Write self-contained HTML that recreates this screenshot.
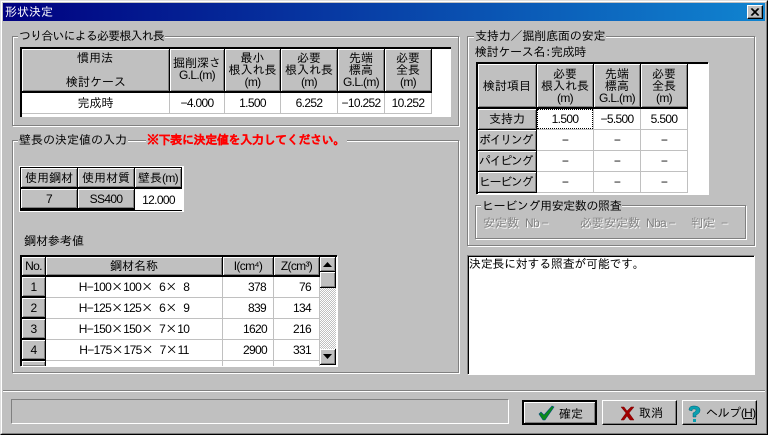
<!DOCTYPE html>
<html lang="ja"><head><meta charset="utf-8"><title>形状決定</title>
<style>
html,body{margin:0;padding:0;width:768px;height:435px;overflow:hidden;background:#c0c0c0}
body{position:relative;font:12px/12px "IPAGothic","Liberation Sans","Noto Sans CJK JP",sans-serif;color:#000}
div,span.a{position:absolute;box-sizing:border-box;white-space:nowrap}
i,.n{font-style:normal;font-family:"Liberation Sans",sans-serif;letter-spacing:-.67px}
.g{border:1px solid #808080;box-shadow:inset 1px 1px #fff,1px 1px #fff}
.l{background:#c0c0c0;height:14px;line-height:14px;padding:0 1px}
.h,.c,.r{display:flex;align-items:center;justify-content:center;text-align:center;line-height:12px}
.h{background:#c0c0c0;border-right:1px solid #000;border-bottom:2px solid #000;box-shadow:inset 1px 1px #fff,inset -1px -1px #808080}
.c{background:#fff;border-right:1px solid #c0c0c0;border-bottom:1px solid #c0c0c0}
.r{justify-content:flex-end}
.t{background:#fff;border-top:2px solid #000;border-left:2px solid #000}
.d{color:#808080;text-shadow:1px 1px 0 #fff}
.b{background:#c0c0c0;border:1px solid #000;border-top-color:#fff;border-left-color:#fff;box-shadow:inset -1px -1px #808080;display:flex;align-items:center;height:25px;top:400px}
</style></head><body>
<!-- window frame -->
<div style="left:0;top:0;width:768px;height:435px;border:1px solid #dfdfdf;border-right-color:#000;border-bottom-color:#000"></div>
<div style="left:1px;top:1px;width:766px;height:433px;border:1px solid #fff;border-right-color:#808080;border-bottom-color:#808080"></div>
<div style="left:3px;top:3px;width:762px;height:18px;background:linear-gradient(90deg,#000080,#1084d0);color:#fff;font-size:12px;line-height:18px;padding-left:2px">形状決定</div>
<div style="left:747px;top:5px;width:16px;height:14px;background:#c0c0c0;border:1px solid #000;border-top-color:#fff;border-left-color:#fff;box-shadow:inset -1px -1px #808080">
<svg width="14" height="12" style="position:absolute;left:0;top:0"><path d="M3 2.5l7 7M4 2.5l7 7M10 2.5l-7 7M11 2.5l-7 7" stroke="#000" fill="none"/></svg></div>

<!-- group 1 -->
<div class="g" style="left:12px;top:36px;width:447px;height:90px"></div>
<div class="l" style="left:18px;top:29px;letter-spacing:-.85px">つり合いによる必要根入れ長</div>
<div class="t" style="left:20px;top:47px;width:431px;height:70px"></div>
<div class="h" style="left:22px;top:49px;width:148px;height:44px;display:block"><span class="a" style="left:55px;top:3px;font-size:12px">慣用法</span><span class="a" style="left:44px;top:27px">検討ケース</span></div>
<div class="h" style="left:170px;top:49px;width:55px;height:44px;padding-bottom:2px"><span>掘削深さ<br><i>G.L.(m)</i></span></div>
<div class="h" style="left:225px;top:49px;width:56px;height:44px"><span>最小<br>根入れ長<br><i>(m)</i></span></div>
<div class="h" style="left:281px;top:49px;width:57px;height:44px"><span>必要<br>根入れ長<br><i>(m)</i></span></div>
<div class="h" style="left:338px;top:49px;width:47px;height:44px"><span>先端<br>標高<br><i>G.L.(m)</i></span></div>
<div class="h" style="left:385px;top:49px;width:47px;height:44px"><span>必要<br>全長<br><i>(m)</i></span></div>
<div class="c" style="left:22px;top:93px;width:148px;height:21px">完成時</div>
<div class="c n" style="left:170px;top:93px;width:55px;height:21px">−4.000</div>
<div class="c n" style="left:225px;top:93px;width:56px;height:21px">1.500</div>
<div class="c n" style="left:281px;top:93px;width:57px;height:21px">6.252</div>
<div class="c n" style="left:338px;top:93px;width:47px;height:21px">−10.252</div>
<div class="c n" style="left:385px;top:93px;width:47px;height:21px">10.252</div>

<!-- group 2 -->
<div class="g" style="left:12px;top:140px;width:447px;height:233px"></div>
<div class="l" style="left:18px;top:133px">壁長の決定値の入力</div>
<div class="l" style="left:146px;top:133px;color:#f00;font-weight:bold;letter-spacing:-.35px;padding-right:2px;-webkit-text-stroke:.3px #f00">※下表に決定値を入力してください。</div>
<div style="left:19px;top:166px;width:165px;height:46px;background:#fff"></div>
<div style="left:20px;top:167px;width:162px;height:44px;background:#000"></div>
<div class="h" style="left:21px;top:168px;width:57px;height:21px">使用鋼材</div>
<div class="h" style="left:78px;top:168px;width:57px;height:21px">使用材質</div>
<div class="h" style="left:135px;top:168px;width:47px;height:21px"><span>壁長<i>(m)</i></span></div>
<div class="h n" style="left:21px;top:189px;width:57px;height:21px">7</div>
<div class="h n" style="left:78px;top:189px;width:57px;height:21px">SS400</div>
<div class="c n" style="left:135px;top:189px;width:47px;height:21px;border:0">12.000</div>
<div style="left:24px;top:235px;height:13px;line-height:13px">鋼材参考値</div>

<div class="t" style="left:20px;top:255px;width:317px;height:111px;box-shadow:1px 1px #fff"></div>
<div class="h n" style="left:22px;top:257px;width:24px;height:20px">No.</div>
<div class="h" style="left:46px;top:257px;width:177px;height:20px">鋼材名称</div>
<div class="h n" style="left:223px;top:257px;width:51px;height:20px">I(cm⁴)</div>
<div class="h n" style="left:274px;top:257px;width:46px;height:20px">Z(cm³)</div>

<div class="h n" style="left:22px;top:277px;width:24px;height:21px">1</div>
<div class="c" style="left:46px;top:277px;width:177px;height:21px;white-space:pre"><span><i>H−100</i>×<i>100</i>× <i>6</i>× <i>8</i></span></div>
<div class="c r n" style="left:223px;top:277px;width:51px;height:21px;padding-right:7px">378</div>
<div class="c r n" style="left:274px;top:277px;width:46px;height:21px;padding-right:8px">76</div>
<div class="h n" style="left:22px;top:298px;width:24px;height:21px">2</div>
<div class="c" style="left:46px;top:298px;width:177px;height:21px;white-space:pre"><span><i>H−125</i>×<i>125</i>× <i>6</i>× <i>9</i></span></div>
<div class="c r n" style="left:223px;top:298px;width:51px;height:21px;padding-right:7px">839</div>
<div class="c r n" style="left:274px;top:298px;width:46px;height:21px;padding-right:8px">134</div>
<div class="h n" style="left:22px;top:319px;width:24px;height:21px">3</div>
<div class="c" style="left:46px;top:319px;width:177px;height:21px;white-space:pre"><span><i>H−150</i>×<i>150</i>× <i>7</i>×<i>10</i></span></div>
<div class="c r n" style="left:223px;top:319px;width:51px;height:21px;padding-right:6px">1620</div>
<div class="c r n" style="left:274px;top:319px;width:46px;height:21px;padding-right:8px">216</div>
<div class="h n" style="left:22px;top:340px;width:24px;height:21px">4</div>
<div class="c" style="left:46px;top:340px;width:177px;height:21px;white-space:pre"><span><i>H−175</i>×<i>175</i>× <i>7</i>×<i>11</i></span></div>
<div class="c r n" style="left:223px;top:340px;width:51px;height:21px;padding-right:6px">2900</div>
<div class="c r n" style="left:274px;top:340px;width:46px;height:21px;padding-right:8px">331</div>
<div class="h" style="left:22px;top:361px;width:24px;height:5px;border-bottom:0"></div>
<div class="c" style="left:46px;top:361px;width:177px;height:5px;border-bottom:0"></div>
<div class="c" style="left:223px;top:361px;width:51px;height:5px;border-bottom:0"></div>
<div class="c" style="left:274px;top:361px;width:46px;height:5px;border-bottom:0"></div>
<!-- scrollbar -->
<div style="left:320px;top:257px;width:16px;height:108px;background:repeating-conic-gradient(#fff 0 25%,#c0c0c0 0 50%) 0 0/2px 2px"></div>
<div class="h" style="left:320px;top:257px;width:16px;height:15px;border-bottom:1px solid #000"><svg width="9" height="5"><path d="M4.5 0L9 5H0z"/></svg></div>
<div class="h" style="left:320px;top:272px;width:16px;height:16px;border-bottom:1px solid #000"></div>
<div class="h" style="left:320px;top:349px;width:16px;height:16px;border-bottom:1px solid #000"><svg width="9" height="5"><path d="M4.5 5L9 0H0z"/></svg></div>

<!-- right group -->
<div class="g" style="left:467px;top:36px;width:288px;height:210px"></div>
<div class="l" style="left:474px;top:29px;letter-spacing:-.15px">支持力／掘削底面の安定</div>
<div style="left:475px;top:46px;height:13px;line-height:13px;letter-spacing:-.3px">検討ケース名:完成時</div>
<div class="t" style="left:476px;top:62px;width:232px;height:132px;box-shadow:1px 1px #fff"></div>
<div class="h" style="left:478px;top:64px;width:59px;height:45px">検討項目</div>
<div class="h" style="left:537px;top:64px;width:57px;height:45px"><span>必要<br>根入れ長<br><i>(m)</i></span></div>
<div class="h" style="left:594px;top:64px;width:47px;height:45px"><span>先端<br>標高<br><i>G.L.(m)</i></span></div>
<div class="h" style="left:641px;top:64px;width:47px;height:45px"><span>必要<br>全長<br><i>(m)</i></span></div>
<div class="h" style="left:478px;top:109px;width:59px;height:21px;border-bottom-width:1px">支持力</div>
<div class="h" style="left:478px;top:130px;width:59px;height:21px;border-bottom-width:1px;justify-content:flex-start;padding-left:1px;letter-spacing:-1.4px">ボイリング</div>
<div class="h" style="left:478px;top:151px;width:59px;height:21px;border-bottom-width:1px;justify-content:flex-start;padding-left:1px;letter-spacing:-1.4px">パイピング</div>
<div class="h" style="left:478px;top:172px;width:59px;height:21px;border-bottom-width:1px;justify-content:flex-start;padding-left:1px;letter-spacing:-1.4px">ヒービング</div>
<div class="c n" style="left:537px;top:109px;width:57px;height:21px">1.500</div>
<div class="c n" style="left:594px;top:109px;width:47px;height:21px">−5.500</div>
<div class="c n" style="left:641px;top:109px;width:47px;height:21px">5.500</div>
<div style="left:537px;top:109px;width:56px;height:20px;border:1px dotted #000"></div>
<div class="c n" style="left:537px;top:130px;width:57px;height:21px">−</div>
<div class="c n" style="left:594px;top:130px;width:47px;height:21px">−</div>
<div class="c n" style="left:641px;top:130px;width:47px;height:21px">−</div>
<div class="c n" style="left:537px;top:151px;width:57px;height:21px">−</div>
<div class="c n" style="left:594px;top:151px;width:47px;height:21px">−</div>
<div class="c n" style="left:641px;top:151px;width:47px;height:21px">−</div>
<div class="c n" style="left:537px;top:172px;width:57px;height:21px">−</div>
<div class="c n" style="left:594px;top:172px;width:47px;height:21px">−</div>
<div class="c n" style="left:641px;top:172px;width:47px;height:21px">−</div>

<div class="g" style="left:475px;top:205px;width:271px;height:34px"></div>
<div class="l" style="left:481px;top:199px;letter-spacing:-.4px">ヒービング用安定数の照査</div>
<div class="d" style="left:483px;top:217px">安定数 <i>Nb −</i></div>
<div class="d" style="left:580px;top:217px">必要安定数 <i>Nba −</i></div>
<div class="d" style="left:691px;top:217px">判定 <i>−</i></div>

<!-- message box -->
<div style="left:467px;top:255px;width:288px;height:120px;background:#fff;border:1px solid #808080;border-right-color:#fff;border-bottom-color:#fff;box-shadow:inset 1px 1px #000"></div>
<div style="left:469px;top:258px;height:13px;line-height:13px;letter-spacing:-.3px">決定長に対する照査が可能です。</div>

<!-- bottom -->
<div style="left:3px;top:390px;width:762px;height:2px;background:#808080;border-bottom:1px solid #fff"></div>
<div style="left:11px;top:399px;width:498px;height:25px;border:1px solid #808080;border-right-color:#fff;border-bottom-color:#fff"></div>

<div class="b" style="left:522px;width:75px;border:2px solid #000;box-shadow:inset 1px 1px #fff,inset -1px -1px #808080">
<svg width="17" height="16" style="position:absolute;left:14px;top:3px"><path d="M1 9l2-2 3 3L14 1l2 1-9 13h-2z" fill="#0a8a1a" stroke="#004a80" stroke-width=".6"/></svg>
<span class="a" style="left:35px;top:6px">確定</span></div>
<div class="b" style="left:602px;width:75px">
<svg width="15" height="15" style="position:absolute;left:17px;top:5px"><path d="M1 1h3l3 4 4-4h3l-5 6 5 7h-4l-3-4-3 4H1l5-7z" fill="#a00000" stroke="#700" stroke-width=".5"/></svg>
<span class="a" style="left:36px;top:6px">取消</span></div>
<div class="b" style="left:682px;width:75px">
<svg width="13" height="18" style="position:absolute;left:5px;top:4px"><path d="M1 5C1 2 3 1 6 1s6 1 6 4-2 4-4 5v2H5V8c2-1 3-2 3-3s-1-1-2-1-2 0-2 2z" fill="#0aa0b0" stroke="#005a70" stroke-width=".5"/><rect x="5" y="14" width="3" height="3" fill="#0aa0b0"/></svg>
<span class="a" style="left:23px;top:6px;letter-spacing:-.4px">ヘルプ<i>(<u>H</u>)</i></span></div>
</body></html>
